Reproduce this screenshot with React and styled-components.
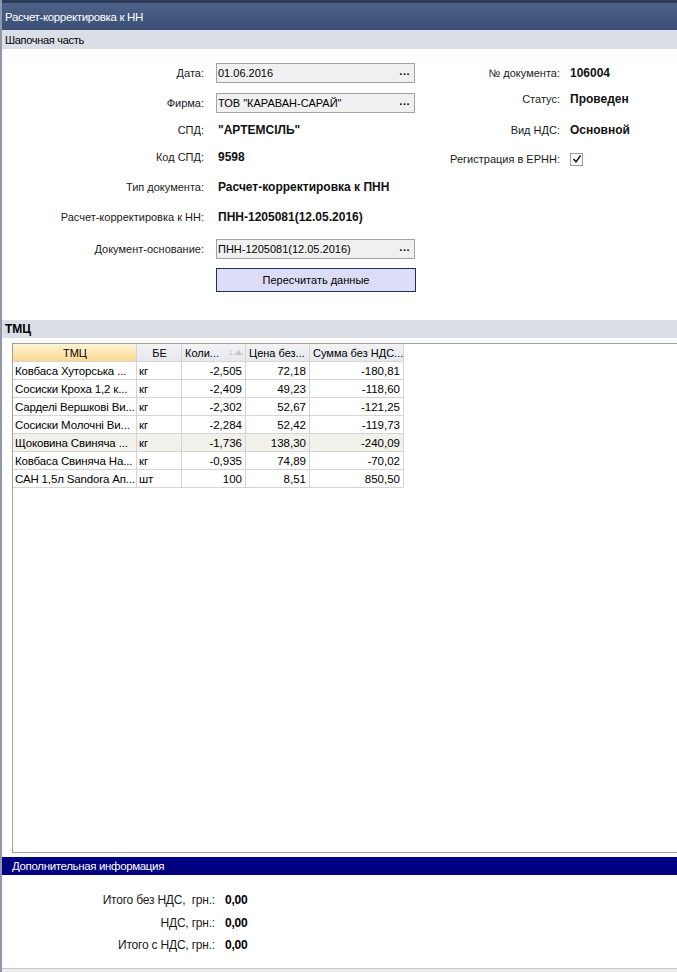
import React from "react";
import styled, { createGlobalStyle } from "styled-components";

const Global = createGlobalStyle`
  html, body { margin: 0; padding: 0; background: #ffffff; }
  body { font-family: "Liberation Sans", Arial, sans-serif; font-size: 11px; color: #000; }
`;

const Window = styled.div`
  width: 677px;
  height: 972px;
  overflow: hidden;
  display: flex;
  flex-direction: column;
  box-sizing: border-box;
  border-left: 2px solid #8e98aa;
  background: #ffffff;
`;

const TitleBar = styled.div`
  height: 30px;
  box-sizing: border-box;
  border-top: 3px solid #2d3b58;
  background: linear-gradient(#4d6289, #3b4f76);
  color: #ffffff;
  font-size: 11.5px;
  letter-spacing: -0.35px;
  display: flex;
  align-items: center;
  padding-left: 3px;
  padding-top: 1px;
  flex-shrink: 0;
`;

const SectionBar = styled.div`
  height: ${(p) => p.h || 19}px;
  background: #dadee7;
  display: flex;
  align-items: center;
  padding-left: 3px;
  font-size: ${(p) => (p.bold ? 12 : 11)}px;
  font-weight: ${(p) => (p.bold ? 700 : 400)};
  letter-spacing: ${(p) => (p.bold ? 0 : -0.3)}px;
  margin-top: ${(p) => p.mt || 0}px;
  flex-shrink: 0;
`;

const Form = styled.div`
  display: flex;
  flex-shrink: 0;
`;

const LeftCol = styled.div`
  display: flex;
  flex-direction: column;
  width: 414px;
`;

const RightCol = styled.div`
  display: flex;
  flex-direction: column;
`;

const Field = styled.div`
  display: grid;
  grid-template-columns: ${(p) => p.labelW}px ${(p) => p.valueW}px;
  column-gap: ${(p) => p.gap}px;
  align-items: center;
  height: ${(p) => p.h || 20}px;
  margin-top: ${(p) => p.mt}px;
`;

const Label = styled.div`
  text-align: right;
  white-space: nowrap;
  color: #1a1a1a;
`;

const Value = styled.div`
  font-weight: 700;
  font-size: 12px;
  padding-left: 2px;
  white-space: nowrap;
  color: #111;
`;

const Input = styled.div`
  height: 20px;
  box-sizing: border-box;
  border: 1px solid #a3a3a3;
  background: #f0f0f0;
  display: flex;
  align-items: center;
  justify-content: space-between;
  padding: 0 4px 0 1px;
  white-space: nowrap;
`;

const Dots = styled.span`
  font-weight: 700;
  letter-spacing: 0.5px;
  margin-top: -4px;
`;

const Button = styled.div`
  grid-column: 2;
  height: 24px;
  box-sizing: border-box;
  border: 1px solid #1e2d5c;
  background: #dcdcf6;
  display: flex;
  align-items: center;
  justify-content: center;
  font-size: 11px;
`;

const Check = styled.div`
  width: 13px;
  height: 13px;
  box-sizing: border-box;
  border: 1px solid #8f9fb3;
  background: #fff;
  display: flex;
  align-items: center;
  justify-content: center;
`;

const GridBox = styled.div`
  margin: 5px 0 0 10px;
  height: 510px;
  flex-shrink: 0;
  border: 1px solid #a0a0a0;
  border-right: none;
  box-sizing: border-box;
  background: #fff;
`;

const Table = styled.div`
  display: grid;
  grid-template-columns: 124px 45px 64px 64px 94px;
  width: 391px;
`;

const HeadCell = styled.div`
  height: 18px;
  box-sizing: border-box;
  border-right: 1px solid #d5d5d5;
  border-bottom: 1px solid #d5d5d5;
  background: ${(p) =>
    p.active ? "linear-gradient(#fff4d8, #fcd990)" : "linear-gradient(#f2f3f5, #e6e8ec)"};
  display: flex;
  align-items: center;
  justify-content: ${(p) => (p.center ? "center" : "space-between")};
  padding: 0 2px 0 3px;
  white-space: nowrap;
  overflow: hidden;
  font-size: 11px;
`;

const SortMark = styled.span`
  color: #c8c8c8;
  font-size: 8px;
  display: flex;
  align-items: center;
  gap: 1px;
`;

const Cell = styled.div`
  height: 18px;
  box-sizing: border-box;
  border-right: 1px solid #d5d5d5;
  border-bottom: 1px solid #d5d5d5;
  background: ${(p) => (p.hl ? "#f2f0ea" : "#fff")};
  display: flex;
  align-items: center;
  justify-content: ${(p) => (p.num ? "flex-end" : "flex-start")};
  padding: 0 3px 0 2px;
  white-space: nowrap;
  overflow: hidden;
  font-size: 11.5px;
  letter-spacing: ${(p) => (p.num ? 0 : -0.15)}px;
`;

const InfoBar = styled.div`
  height: 18px;
  margin-top: 4px;
  background: #000080;
  color: #fff;
  display: flex;
  align-items: center;
  padding-left: 10px;
  font-size: 11.5px;
  letter-spacing: -0.35px;
  flex-shrink: 0;
`;

const Totals = styled.div`
  display: flex;
  flex-direction: column;
  margin-top: 14px;
`;

const TotalRow = styled.div`
  display: grid;
  grid-template-columns: 213px auto;
  column-gap: 10px;
  height: 22.5px;
  align-items: center;
  font-size: 12px;
  letter-spacing: -0.2px;
`;

const TotalVal = styled.div`
  font-weight: 700;
`;

const Footer = styled.div`
  margin-top: auto;
  height: 3px;
  border-top: 1px solid #c6c6c6;
  background: #eeeeee;
`;

const rows = [
  ["Ковбаса Хуторська ...", "кг", "-2,505", "72,18", "-180,81"],
  ["Сосиски Кроха 1,2 к...", "кг", "-2,409", "49,23", "-118,60"],
  ["Сарделі Вершкові Ви...", "кг", "-2,302", "52,67", "-121,25"],
  ["Сосиски Молочні Ви...", "кг", "-2,284", "52,42", "-119,73"],
  ["Щоковина Свиняча ...", "кг", "-1,736", "138,30", "-240,09"],
  ["Ковбаса Свиняча На...", "кг", "-0,935", "74,89", "-70,02"],
  ["САН 1,5л Sandora Ап...", "шт", "100", "8,51", "850,50"],
];

export default function App() {
  return (
    <>
      <Global />
      <Window>
        <TitleBar>Расчет-корректировка к НН</TitleBar>
        <SectionBar>Шапочная часть</SectionBar>
        <Form>
          <LeftCol>
            <Field labelW={202} valueW={199} gap={12} mt={14}>
              <Label>Дата:</Label>
              <Input>01.06.2016<Dots>...</Dots></Input>
            </Field>
            <Field labelW={202} valueW={199} gap={12} mt={10}>
              <Label>Фирма:</Label>
              <Input>ТОВ "КАРАВАН-САРАЙ"<Dots>...</Dots></Input>
            </Field>
            <Field labelW={202} valueW={199} gap={12} mt={7}>
              <Label>СПД:</Label>
              <Value>"АРТЕМСІЛЬ"</Value>
            </Field>
            <Field labelW={202} valueW={199} gap={12} mt={7}>
              <Label>Код СПД:</Label>
              <Value>9598</Value>
            </Field>
            <Field labelW={202} valueW={199} gap={12} mt={10}>
              <Label>Тип документа:</Label>
              <Value>Расчет-корректировка к ПНН</Value>
            </Field>
            <Field labelW={202} valueW={199} gap={12} mt={10}>
              <Label>Расчет-корректировка к НН:</Label>
              <Value>ПНН-1205081(12.05.2016)</Value>
            </Field>
            <Field labelW={202} valueW={199} gap={12} mt={12}>
              <Label>Документ-основание:</Label>
              <Input>ПНН-1205081(12.05.2016)<Dots>...</Dots></Input>
            </Field>
            <Field labelW={202} valueW={200} gap={12} mt={9} h={24}>
              <Button>Пересчитать данные</Button>
            </Field>
          </LeftCol>
          <RightCol>
            <Field labelW={144} valueW={100} gap={8} mt={14}>
              <Label>№ документа:</Label>
              <Value>106004</Value>
            </Field>
            <Field labelW={144} valueW={100} gap={8} mt={6}>
              <Label>Статус:</Label>
              <Value>Проведен</Value>
            </Field>
            <Field labelW={144} valueW={100} gap={8} mt={11}>
              <Label>Вид НДС:</Label>
              <Value>Основной</Value>
            </Field>
            <Field labelW={144} valueW={100} gap={10} mt={9}>
              <Label>Регистрация в ЕРНН:</Label>
              <Check>
                <svg width="10" height="10" viewBox="0 0 10 10">
                  <path d="M1.5 5 L4 7.8 L8.5 1.5" fill="none" stroke="#111" strokeWidth="1.4" />
                </svg>
              </Check>
            </Field>
          </RightCol>
        </Form>
        <SectionBar mt={28} h={18} bold>ТМЦ</SectionBar>
        <GridBox>
          <Table>
            <HeadCell active center>ТМЦ</HeadCell>
            <HeadCell center>БЕ</HeadCell>
            <HeadCell>
              Коли...
              <SortMark>
                1<svg width="9" height="5" viewBox="0 0 9 5"><path d="M0 5 L4.5 0 L9 5Z" fill="#c8c8c8" /></svg>
              </SortMark>
            </HeadCell>
            <HeadCell>Цена без...</HeadCell>
            <HeadCell>Сумма без НДС...</HeadCell>
            {rows.map((r, i) =>
              r.map((c, j) => (
                <Cell key={i + "-" + j} num={j >= 2} hl={i === 4}>
                  {c}
                </Cell>
              ))
            )}
          </Table>
        </GridBox>
        <InfoBar>Дополнительная информация</InfoBar>
        <Totals>
          <TotalRow>
            <Label>Итого без НДС,&nbsp; грн.:</Label>
            <TotalVal>0,00</TotalVal>
          </TotalRow>
          <TotalRow>
            <Label>НДС, грн.:</Label>
            <TotalVal>0,00</TotalVal>
          </TotalRow>
          <TotalRow>
            <Label>Итого с НДС, грн.:</Label>
            <TotalVal>0,00</TotalVal>
          </TotalRow>
        </Totals>
        <Footer />
      </Window>
    </>
  );
}
